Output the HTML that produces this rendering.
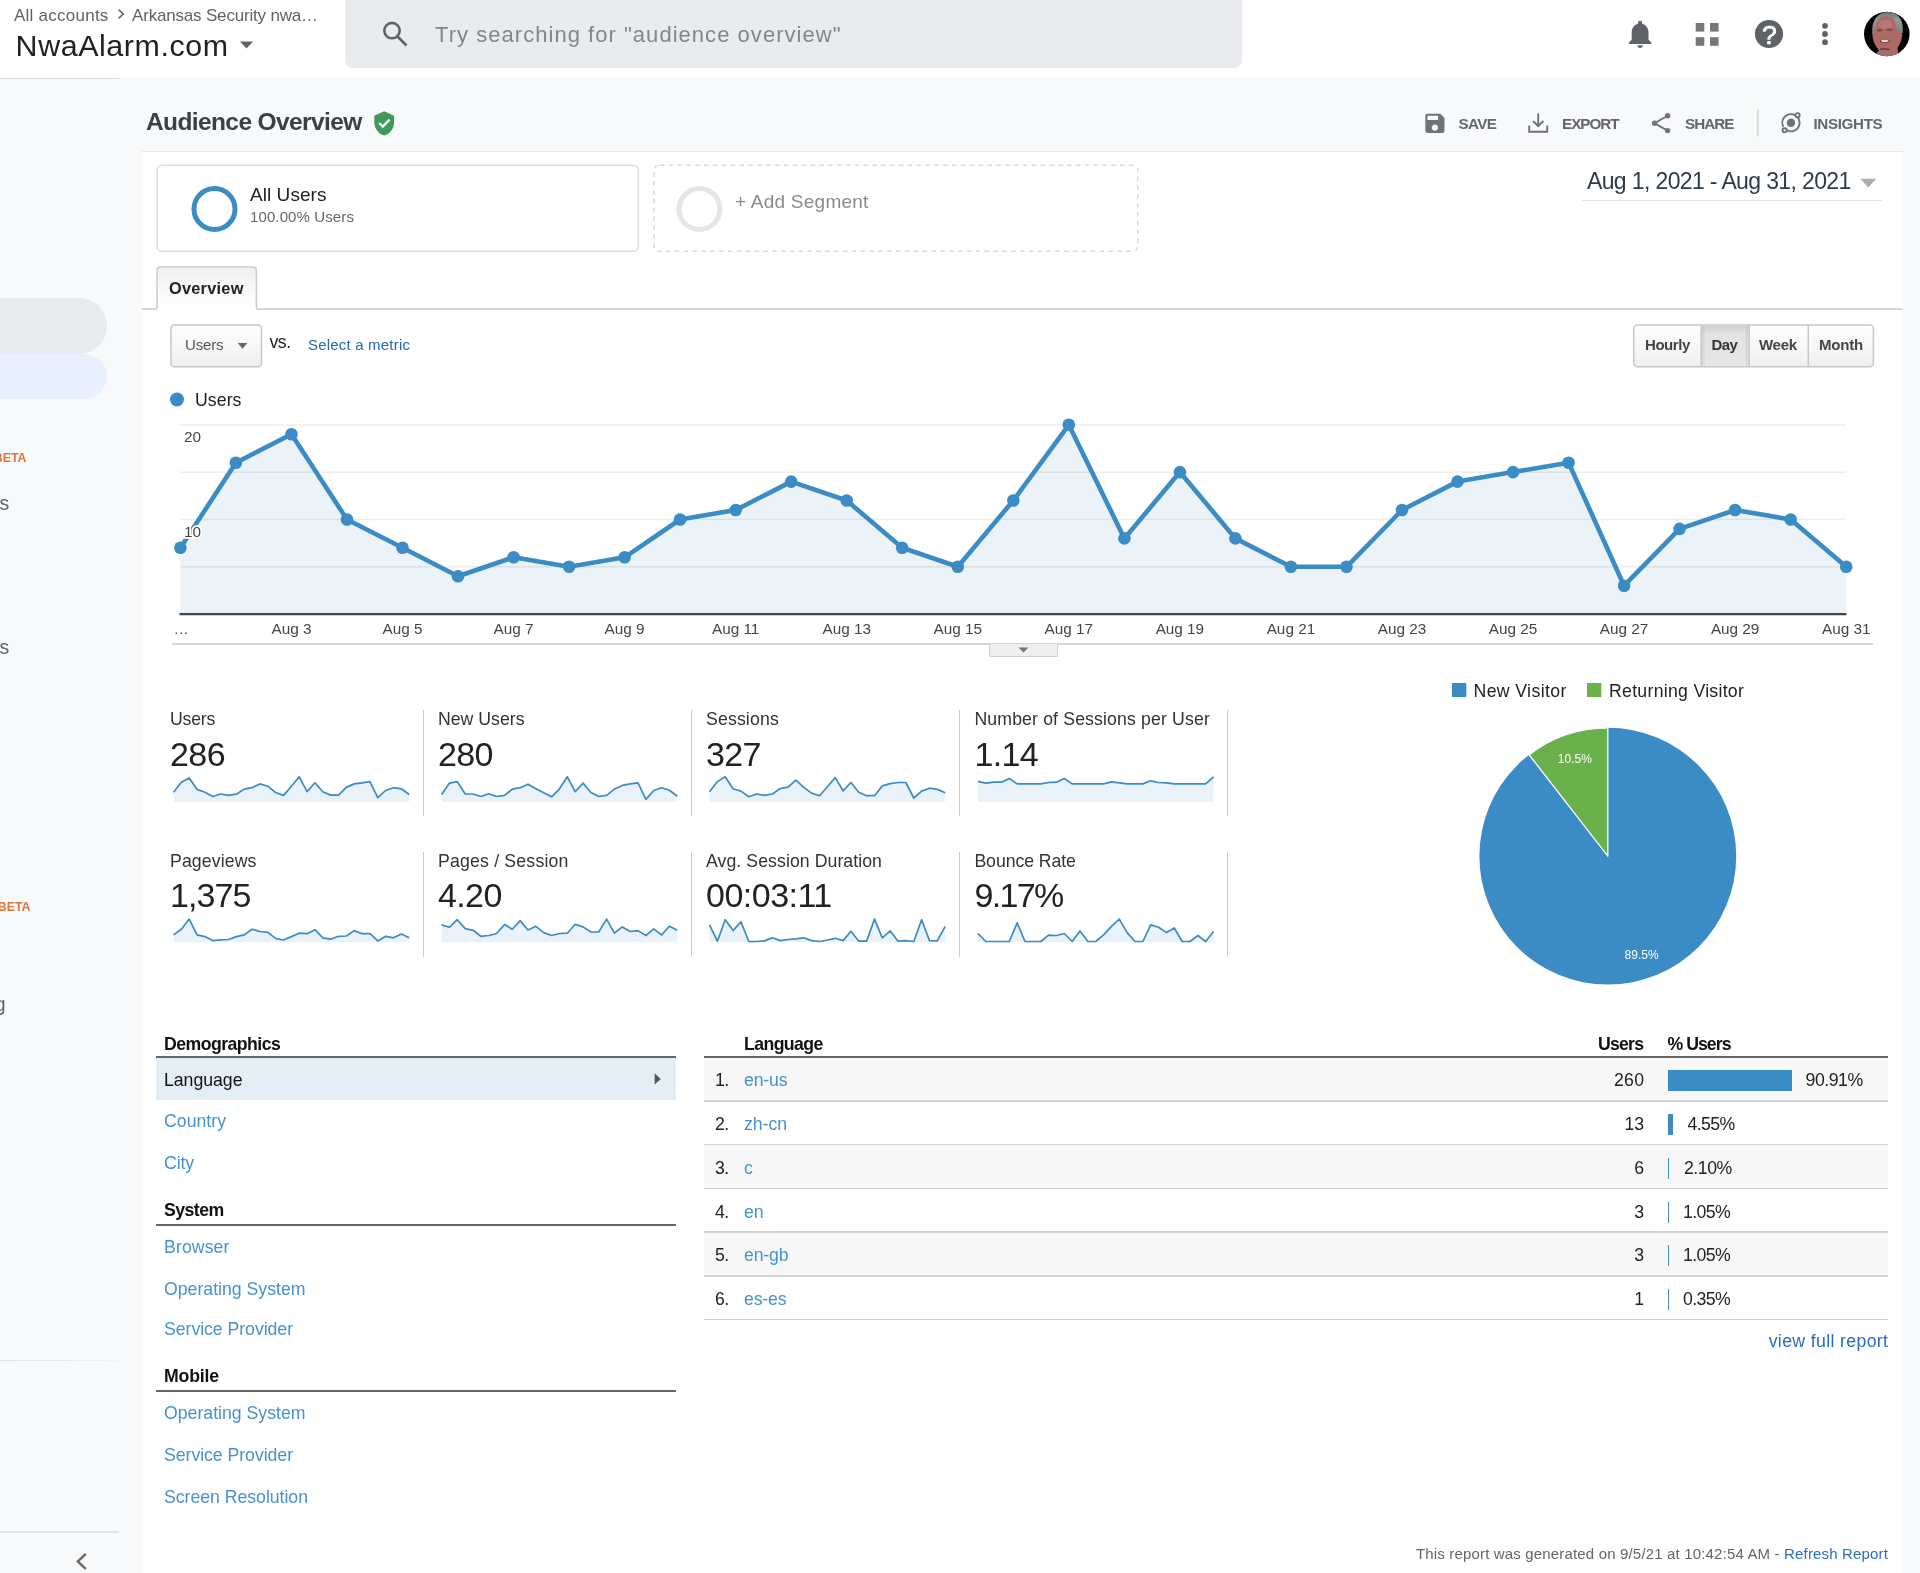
<!DOCTYPE html>
<html lang="en">
<head>
<meta charset="utf-8">
<title>Analytics - Audience Overview</title>
<style>
html,body{margin:0;padding:0;}
html{overflow:hidden;width:1920px;height:1573px;}
body{width:1920px;height:1573px;position:relative;overflow:hidden;background:#f8f9fa;font-family:"Liberation Sans",sans-serif;}
.a{position:absolute;}
.t{position:absolute;white-space:nowrap;font-family:"Liberation Sans",sans-serif;}
#hdr{left:0;top:0;width:1920px;height:77px;background:#fff;}
#search{left:345px;top:-8px;width:897px;height:76px;background:#e9ebee;border-radius:8px;}
#panel{left:141.8px;top:151px;width:1760.8px;height:1422px;box-sizing:border-box;background:#fff;border-top:1.3px solid #e6e7e8;box-shadow:1.5px 0 0 #fafbfc;}
.hl{position:absolute;height:1px;background:#dadce0;}
.vdiv{position:absolute;width:1px;background:#ccc;}
.row{position:absolute;left:704px;width:1184px;}
.rl{position:absolute;left:704px;width:1184px;height:1.6px;background:#d2d2d2;}
.bar{position:absolute;left:1667.5px;height:21px;background:#3b8bc4;}
svg{position:absolute;left:0;top:0;overflow:visible;will-change:transform;}
#txt{position:absolute;left:0;top:0;width:1920px;height:1573px;will-change:transform;}
</style>
</head>
<body>
<!-- top header -->
<div class="a" id="hdr"></div>
<div class="a" id="search"></div>
<div class="hl" style="left:0;top:77.5px;width:119px;"></div>

<!-- left nav (collapsed / scrolled) -->
<div class="a" style="left:-60px;top:298px;width:167px;height:55.5px;border-radius:28px;background:#e8eaed;"></div>
<div class="a" style="left:-60px;top:353.5px;width:167px;height:45px;border-radius:23px;background:#e8f0fe;"></div>
<div class="hl" style="left:0;top:1360px;width:119px;height:1.4px;background:linear-gradient(to right,#e1e2e4,#e6e7e9 50%,#f3f4f5);"></div>
<div class="hl" style="left:0;top:1531.2px;width:119px;height:1.4px;background:#e2e3e5;"></div>

<!-- main white panel -->
<div class="a" id="panel"></div>

<!-- segments -->
<div class="hl" style="left:1582px;top:200px;width:299.5px;background:#e4e4e4;"></div>

<!-- chart bottom rule + handle -->
<div class="hl" style="left:171.5px;top:643px;width:1701.5px;background:#d6d6d6;height:1.5px;"></div>
<div class="a" style="left:988.5px;top:644px;width:69px;height:12.5px;box-sizing:border-box;border:1px solid #d0d0d0;border-top:none;background:#efefef;border-radius:0 0 2px 2px;"></div>

<!-- metric dividers -->
<div class="vdiv" style="left:423px;top:710px;height:106px;"></div>
<div class="vdiv" style="left:691px;top:710px;height:106px;"></div>
<div class="vdiv" style="left:959px;top:710px;height:106px;"></div>
<div class="vdiv" style="left:1227px;top:710px;height:106px;"></div>
<div class="vdiv" style="left:423px;top:852px;height:105px;"></div>
<div class="vdiv" style="left:691px;top:852px;height:105px;"></div>
<div class="vdiv" style="left:959px;top:852px;height:105px;"></div>
<div class="vdiv" style="left:1227px;top:852px;height:105px;"></div>

<!-- demographics list -->
<div class="a" style="left:156px;top:1058px;width:520px;height:41.5px;background:#e3eef5;"></div>
<div class="hl" style="left:156px;top:1055.9px;width:520px;height:2px;background:#666;"></div>
<div class="hl" style="left:156px;top:1223.9px;width:520px;height:2px;background:#666;"></div>
<div class="hl" style="left:156px;top:1389.9px;width:520px;height:2px;background:#666;"></div>

<!-- language table -->
<div class="row" style="top:1058px;height:43.0px;background:#f7f7f7"></div>
<div class="bar" style="top:1070px;width:124.5px"></div>
<div class="row" style="top:1101.0px;height:43.700000000000045px;background:#fff"></div>
<div class="bar" style="top:1114px;width:5.5px"></div>
<div class="row" style="top:1144.7px;height:43.700000000000045px;background:#f7f7f7"></div>
<div class="bar" style="top:1157.5px;width:1.8px"></div>
<div class="row" style="top:1188.4px;height:43.69999999999982px;background:#fff"></div>
<div class="bar" style="top:1201.5px;width:1.8px"></div>
<div class="row" style="top:1232.1px;height:43.700000000000045px;background:#f7f7f7"></div>
<div class="bar" style="top:1245px;width:1.8px"></div>
<div class="row" style="top:1275.8px;height:43.700000000000045px;background:#fff"></div>
<div class="bar" style="top:1289px;width:1.8px"></div>
<div class="rl" style="top:1100.20px;"></div>
<div class="rl" style="top:1143.90px;"></div>
<div class="rl" style="top:1187.60px;"></div>
<div class="rl" style="top:1231.30px;"></div>
<div class="rl" style="top:1275.00px;"></div>
<div class="rl" style="top:1318.70px;"></div>
<div class="hl" style="left:704px;top:1055.9px;width:1184px;height:2px;background:#666;"></div>

<!-- vector layer: chart, pie, sparklines, icons -->
<svg width="1920" height="1573" viewBox="0 0 1920 1573">
  <defs>
    <linearGradient id="gTab" x1="0" y1="0" x2="0" y2="1"><stop offset="0" stop-color="#f0f0f0"/><stop offset="1" stop-color="#ffffff"/></linearGradient>
    <linearGradient id="gBtn" x1="0" y1="0" x2="0" y2="1"><stop offset="0" stop-color="#ffffff"/><stop offset="1" stop-color="#efefef"/></linearGradient>
    <linearGradient id="gDay" x1="0" y1="0" x2="0" y2="1"><stop offset="0" stop-color="#d2d2d2"/><stop offset="0.2" stop-color="#e2e2e2"/><stop offset="1" stop-color="#e6e6e6"/></linearGradient>
  </defs>
  <!-- segment boxes -->
  <rect x="157.25" y="165.35" width="481.05" height="85.8" rx="4.6" fill="#fff" stroke="#dedede" stroke-width="1.5"/>
  <rect x="654.05" y="165.35" width="483.7" height="85.8" rx="4.6" fill="#fff" stroke="#d9d9d9" stroke-width="1.5" stroke-dasharray="4.7 4.15" stroke-dashoffset="-1.2"/>
  <!-- overview tab + rule -->
  <path d="M157,309 V270.5 Q157,267 160.5,267 H252.85 Q256.35,267 256.35,270.5 V309 Z" fill="url(#gTab)"/>
  <path d="M141.8,309 H155.5 Q157,309 157,307.5 V270.5 Q157,267 160.5,267 H252.85 Q256.35,267 256.35,270.5 V307.5 Q256.35,309 257.85,309 H1902.5" fill="none" stroke="#cacaca" stroke-width="1.5"/>
  <!-- metric selector -->
  <rect x="170.95" y="325.05" width="90.55" height="41.7" rx="3.6" fill="url(#gBtn)" stroke="#c8c8c8" stroke-width="1.5"/>
  <!-- granularity buttons -->
  <rect x="1633.8" y="325" width="239.6" height="41.7" rx="3.6" fill="url(#gBtn)" stroke="#c8c8c8" stroke-width="1.5"/>
  <rect x="1701.9" y="326" width="46.6" height="39.7" fill="url(#gDay)"/>
  <rect x="1701.9" y="326" width="3" height="39.7" fill="#000" fill-opacity="0.05"/>
  <rect x="1745.5" y="326" width="3" height="39.7" fill="#000" fill-opacity="0.05"/>
  <g stroke="#c8c8c8" stroke-width="1.5"><path d="M1701.2,325.3 V366.4 M1749.2,325.3 V366.4 M1808.3,325.3 V366.4"/></g>
  <!-- gridlines -->
  <g stroke="#ededed" stroke-width="1.5">
    <line x1="180" y1="425" x2="1846" y2="425"/>
    <line x1="180" y1="472.2" x2="1846" y2="472.2"/>
    <line x1="180" y1="519.6" x2="1846" y2="519.6"/>
    <line x1="180" y1="566.8" x2="1846" y2="566.8"/>
  </g>
  <polygon points="180.4,614.1 180.4,547.8 235.9,462.7 291.5,434.3 347.0,519.5 402.5,547.8 458.0,576.2 513.6,557.3 569.1,566.8 624.6,557.3 680.1,519.5 735.7,510.0 791.2,481.6 846.7,500.5 902.2,547.8 957.8,566.8 1013.3,500.5 1068.8,424.8 1124.4,538.4 1179.9,472.1 1235.4,538.4 1290.9,566.8 1346.5,566.8 1402.0,510.0 1457.5,481.6 1513.0,472.1 1568.6,462.7 1624.1,585.7 1679.6,528.9 1735.1,510.0 1790.7,519.5 1846.2,566.8 1846.2,614.1" fill="#3b8bc4" fill-opacity="0.1"/>
  <line x1="179.5" y1="614.2" x2="1846.5" y2="614.2" stroke="#444" stroke-width="2.2"/>
  <polyline points="180.4,547.8 235.9,462.7 291.5,434.3 347.0,519.5 402.5,547.8 458.0,576.2 513.6,557.3 569.1,566.8 624.6,557.3 680.1,519.5 735.7,510.0 791.2,481.6 846.7,500.5 902.2,547.8 957.8,566.8 1013.3,500.5 1068.8,424.8 1124.4,538.4 1179.9,472.1 1235.4,538.4 1290.9,566.8 1346.5,566.8 1402.0,510.0 1457.5,481.6 1513.0,472.1 1568.6,462.7 1624.1,585.7 1679.6,528.9 1735.1,510.0 1790.7,519.5 1846.2,566.8" fill="none" stroke="#3b8bc4" stroke-width="4.6" stroke-linejoin="round" stroke-linecap="round"/>
  <g fill="#3b8bc4"><circle cx="180.4" cy="547.8" r="6.3"/><circle cx="235.9" cy="462.7" r="6.3"/><circle cx="291.5" cy="434.3" r="6.3"/><circle cx="347.0" cy="519.5" r="6.3"/><circle cx="402.5" cy="547.8" r="6.3"/><circle cx="458.0" cy="576.2" r="6.3"/><circle cx="513.6" cy="557.3" r="6.3"/><circle cx="569.1" cy="566.8" r="6.3"/><circle cx="624.6" cy="557.3" r="6.3"/><circle cx="680.1" cy="519.5" r="6.3"/><circle cx="735.7" cy="510.0" r="6.3"/><circle cx="791.2" cy="481.6" r="6.3"/><circle cx="846.7" cy="500.5" r="6.3"/><circle cx="902.2" cy="547.8" r="6.3"/><circle cx="957.8" cy="566.8" r="6.3"/><circle cx="1013.3" cy="500.5" r="6.3"/><circle cx="1068.8" cy="424.8" r="6.3"/><circle cx="1124.4" cy="538.4" r="6.3"/><circle cx="1179.9" cy="472.1" r="6.3"/><circle cx="1235.4" cy="538.4" r="6.3"/><circle cx="1290.9" cy="566.8" r="6.3"/><circle cx="1346.5" cy="566.8" r="6.3"/><circle cx="1402.0" cy="510.0" r="6.3"/><circle cx="1457.5" cy="481.6" r="6.3"/><circle cx="1513.0" cy="472.1" r="6.3"/><circle cx="1568.6" cy="462.7" r="6.3"/><circle cx="1624.1" cy="585.7" r="6.3"/><circle cx="1679.6" cy="528.9" r="6.3"/><circle cx="1735.1" cy="510.0" r="6.3"/><circle cx="1790.7" cy="519.5" r="6.3"/><circle cx="1846.2" cy="566.8" r="6.3"/></g>
  <circle cx="177" cy="399.5" r="7" fill="#3b8bc4"/>
  <!-- handle triangle -->
  <path d="M1018.5,647.5 h10 l-5,5 z" fill="#777"/>
  <!-- sparklines -->
  <polygon points="173.5,801.7 173.5,792.2 181.4,782.2 189.2,777.9 197.1,789.4 204.9,792.2 212.8,796.5 220.6,794.0 228.5,795.4 236.4,794.2 244.2,789.1 252.1,787.7 259.9,783.9 267.8,786.2 275.6,792.5 283.5,795.4 291.4,786.2 299.2,776.8 307.1,791.7 314.9,782.8 322.8,791.7 330.6,795.1 338.5,795.1 346.3,787.4 354.2,783.9 362.1,782.8 369.9,781.6 377.8,797.7 385.6,790.5 393.5,787.7 401.3,788.8 409.2,794.5 409.2,801.7" fill="#e9f1f9"/><polyline points="173.5,792.2 181.4,782.2 189.2,777.9 197.1,789.4 204.9,792.2 212.8,796.5 220.6,794.0 228.5,795.4 236.4,794.2 244.2,789.1 252.1,787.7 259.9,783.9 267.8,786.2 275.6,792.5 283.5,795.4 291.4,786.2 299.2,776.8 307.1,791.7 314.9,782.8 322.8,791.7 330.6,795.1 338.5,795.1 346.3,787.4 354.2,783.9 362.1,782.8 369.9,781.6 377.8,797.7 385.6,790.5 393.5,787.7 401.3,788.8 409.2,794.5" fill="none" stroke="#3b8bc4" stroke-width="1.7" stroke-linejoin="round"/>
<polygon points="441.6,801.7 441.6,794.5 449.5,783.1 457.3,781.6 465.2,794.0 473.0,794.0 480.9,796.5 488.7,793.7 496.6,796.5 504.5,795.4 512.3,789.1 520.2,787.7 528.0,784.2 535.9,788.8 543.7,792.8 551.6,796.8 559.5,788.8 567.3,776.8 575.2,791.7 583.0,783.1 590.9,792.5 598.7,796.5 606.6,795.4 614.4,789.1 622.3,785.4 630.2,783.9 638.0,782.8 645.9,799.4 653.7,790.5 661.6,787.7 669.4,790.2 677.3,796.2 677.3,801.7" fill="#e9f1f9"/><polyline points="441.6,794.5 449.5,783.1 457.3,781.6 465.2,794.0 473.0,794.0 480.9,796.5 488.7,793.7 496.6,796.5 504.5,795.4 512.3,789.1 520.2,787.7 528.0,784.2 535.9,788.8 543.7,792.8 551.6,796.8 559.5,788.8 567.3,776.8 575.2,791.7 583.0,783.1 590.9,792.5 598.7,796.5 606.6,795.4 614.4,789.1 622.3,785.4 630.2,783.9 638.0,782.8 645.9,799.4 653.7,790.5 661.6,787.7 669.4,790.2 677.3,796.2" fill="none" stroke="#3b8bc4" stroke-width="1.7" stroke-linejoin="round"/>
<polygon points="709.5,801.7 709.5,791.7 717.4,781.6 725.2,776.8 733.1,788.8 740.9,791.1 748.8,796.8 756.6,794.0 764.5,795.4 772.4,794.0 780.2,788.5 788.1,787.1 795.9,780.2 803.8,787.4 811.6,793.1 819.5,795.7 827.4,786.8 835.2,777.6 843.1,790.8 850.9,782.5 858.8,792.2 866.6,795.7 874.5,795.7 882.3,785.9 890.2,783.6 898.1,782.5 905.9,782.5 913.8,798.0 921.6,791.1 929.5,788.2 937.3,789.4 945.2,792.8 945.2,801.7" fill="#e9f1f9"/><polyline points="709.5,791.7 717.4,781.6 725.2,776.8 733.1,788.8 740.9,791.1 748.8,796.8 756.6,794.0 764.5,795.4 772.4,794.0 780.2,788.5 788.1,787.1 795.9,780.2 803.8,787.4 811.6,793.1 819.5,795.7 827.4,786.8 835.2,777.6 843.1,790.8 850.9,782.5 858.8,792.2 866.6,795.7 874.5,795.7 882.3,785.9 890.2,783.6 898.1,782.5 905.9,782.5 913.8,798.0 921.6,791.1 929.5,788.2 937.3,789.4 945.2,792.8" fill="none" stroke="#3b8bc4" stroke-width="1.7" stroke-linejoin="round"/>
<polygon points="977.9,801.7 977.9,781.4 985.8,783.1 993.6,782.2 1001.5,782.2 1009.3,778.5 1017.2,783.9 1025.0,783.9 1032.9,783.9 1040.8,783.9 1048.6,782.5 1056.5,782.2 1064.3,778.5 1072.2,783.9 1080.0,783.9 1087.9,783.9 1095.8,783.9 1103.6,783.9 1111.5,781.9 1119.3,782.8 1127.2,783.9 1135.0,783.9 1142.9,783.9 1150.7,780.8 1158.6,782.5 1166.5,782.8 1174.3,783.9 1182.2,783.9 1190.0,783.9 1197.9,783.9 1205.7,783.9 1213.6,776.8 1213.6,801.7" fill="#e9f1f9"/><polyline points="977.9,781.4 985.8,783.1 993.6,782.2 1001.5,782.2 1009.3,778.5 1017.2,783.9 1025.0,783.9 1032.9,783.9 1040.8,783.9 1048.6,782.5 1056.5,782.2 1064.3,778.5 1072.2,783.9 1080.0,783.9 1087.9,783.9 1095.8,783.9 1103.6,783.9 1111.5,781.9 1119.3,782.8 1127.2,783.9 1135.0,783.9 1142.9,783.9 1150.7,780.8 1158.6,782.5 1166.5,782.8 1174.3,783.9 1182.2,783.9 1190.0,783.9 1197.9,783.9 1205.7,783.9 1213.6,776.8" fill="none" stroke="#3b8bc4" stroke-width="1.7" stroke-linejoin="round"/>
<polygon points="173.5,942.3 173.5,934.9 181.4,929.2 189.2,919.1 197.1,934.9 204.9,936.6 212.8,940.6 220.6,939.8 228.5,939.5 236.4,936.6 244.2,934.9 252.1,929.2 259.9,931.5 267.8,932.3 275.6,938.3 283.5,940.0 291.4,936.6 299.2,933.2 307.1,933.7 314.9,929.7 322.8,937.8 330.6,939.2 338.5,936.3 346.3,936.0 354.2,930.6 362.1,933.7 369.9,933.5 377.8,940.9 385.6,936.3 393.5,937.8 401.3,934.0 409.2,937.8 409.2,942.3" fill="#e9f1f9"/><polyline points="173.5,934.9 181.4,929.2 189.2,919.1 197.1,934.9 204.9,936.6 212.8,940.6 220.6,939.8 228.5,939.5 236.4,936.6 244.2,934.9 252.1,929.2 259.9,931.5 267.8,932.3 275.6,938.3 283.5,940.0 291.4,936.6 299.2,933.2 307.1,933.7 314.9,929.7 322.8,937.8 330.6,939.2 338.5,936.3 346.3,936.0 354.2,930.6 362.1,933.7 369.9,933.5 377.8,940.9 385.6,936.3 393.5,937.8 401.3,934.0 409.2,937.8" fill="none" stroke="#3b8bc4" stroke-width="1.7" stroke-linejoin="round"/>
<polygon points="441.6,942.3 441.6,924.9 449.5,927.2 457.3,919.7 465.2,928.6 473.0,930.3 480.9,936.3 488.7,935.5 496.6,933.5 504.5,924.6 512.3,929.2 520.2,920.6 528.0,930.0 535.9,926.3 543.7,932.6 551.6,935.5 559.5,933.5 567.3,933.2 575.2,924.3 583.0,926.9 590.9,932.0 598.7,932.0 606.6,919.1 614.4,933.2 622.3,926.9 630.2,931.5 638.0,930.6 645.9,935.5 653.7,928.9 661.6,934.9 669.4,926.3 677.3,930.3 677.3,942.3" fill="#e9f1f9"/><polyline points="441.6,924.9 449.5,927.2 457.3,919.7 465.2,928.6 473.0,930.3 480.9,936.3 488.7,935.5 496.6,933.5 504.5,924.6 512.3,929.2 520.2,920.6 528.0,930.0 535.9,926.3 543.7,932.6 551.6,935.5 559.5,933.5 567.3,933.2 575.2,924.3 583.0,926.9 590.9,932.0 598.7,932.0 606.6,919.1 614.4,933.2 622.3,926.9 630.2,931.5 638.0,930.6 645.9,935.5 653.7,928.9 661.6,934.9 669.4,926.3 677.3,930.3" fill="none" stroke="#3b8bc4" stroke-width="1.7" stroke-linejoin="round"/>
<polygon points="709.5,942.3 709.5,924.9 717.4,941.2 725.2,919.7 733.1,930.6 740.9,921.7 748.8,941.5 756.6,941.5 764.5,940.9 772.4,937.8 780.2,940.6 788.1,939.5 795.9,938.9 803.8,937.8 811.6,940.6 819.5,941.5 827.4,940.0 835.2,938.3 843.1,940.6 850.9,931.2 858.8,941.2 866.6,941.2 874.5,919.1 882.3,937.8 890.2,930.9 898.1,941.2 905.9,940.6 913.8,941.5 921.6,919.7 929.5,940.6 937.3,940.9 945.2,926.3 945.2,942.3" fill="#e9f1f9"/><polyline points="709.5,924.9 717.4,941.2 725.2,919.7 733.1,930.6 740.9,921.7 748.8,941.5 756.6,941.5 764.5,940.9 772.4,937.8 780.2,940.6 788.1,939.5 795.9,938.9 803.8,937.8 811.6,940.6 819.5,941.5 827.4,940.0 835.2,938.3 843.1,940.6 850.9,931.2 858.8,941.2 866.6,941.2 874.5,919.1 882.3,937.8 890.2,930.9 898.1,941.2 905.9,940.6 913.8,941.5 921.6,919.7 929.5,940.6 937.3,940.9 945.2,926.3" fill="none" stroke="#3b8bc4" stroke-width="1.7" stroke-linejoin="round"/>
<polygon points="977.9,942.3 977.9,933.5 985.8,941.5 993.6,941.5 1001.5,941.5 1009.3,941.5 1017.2,922.9 1025.0,941.5 1032.9,941.5 1040.8,941.5 1048.6,935.2 1056.5,935.5 1064.3,933.5 1072.2,941.5 1080.0,930.9 1087.9,941.5 1095.8,941.5 1103.6,934.9 1111.5,926.3 1119.3,919.1 1127.2,932.6 1135.0,941.5 1142.9,941.5 1150.7,924.9 1158.6,927.2 1166.5,932.6 1174.3,928.0 1182.2,941.5 1190.0,941.5 1197.9,935.5 1205.7,941.5 1213.6,931.2 1213.6,942.3" fill="#e9f1f9"/><polyline points="977.9,933.5 985.8,941.5 993.6,941.5 1001.5,941.5 1009.3,941.5 1017.2,922.9 1025.0,941.5 1032.9,941.5 1040.8,941.5 1048.6,935.2 1056.5,935.5 1064.3,933.5 1072.2,941.5 1080.0,930.9 1087.9,941.5 1095.8,941.5 1103.6,934.9 1111.5,926.3 1119.3,919.1 1127.2,932.6 1135.0,941.5 1142.9,941.5 1150.7,924.9 1158.6,927.2 1166.5,932.6 1174.3,928.0 1182.2,941.5 1190.0,941.5 1197.9,935.5 1205.7,941.5 1213.6,931.2" fill="none" stroke="#3b8bc4" stroke-width="1.7" stroke-linejoin="round"/>
  <!-- pie -->
  <circle cx="1607.8" cy="856.2" r="128.4" fill="#3b8bc4"/><path d="M1607.8,856.2 L1607.8,727.8000000000001 A128.4,128.4 0 0 0 1529.10,754.74 Z" fill="#6ab04b" stroke="#fff" stroke-width="1.3" stroke-linejoin="round"/>
  <rect x="1452" y="683" width="14.3" height="14" fill="#3b8bc4"/>
  <rect x="1587" y="683" width="14.3" height="14" fill="#6ab04b"/>
  <text x="1574.8" y="762.5" font-family="Liberation Sans, sans-serif" font-size="12" fill="#fff" text-anchor="middle">10.5%</text>
  <text x="1641.6" y="959" font-family="Liberation Sans, sans-serif" font-size="12" fill="#fff" text-anchor="middle">89.5%</text>

  <!-- segment circles -->
  <circle cx="214.5" cy="209" r="20.5" fill="none" stroke="#3b8bc4" stroke-width="5"/>
  <circle cx="699.5" cy="209" r="20.5" fill="none" stroke="#e5e5e5" stroke-width="5.2"/>

  <!-- breadcrumb chevron -->
  <path d="M118.6,9.6 l4.7,4.4 l-4.7,4.4" fill="none" stroke="#5f6368" stroke-width="1.6"/>
  <!-- property dropdown arrow -->
  <path d="M240,41.5 h13 l-6.5,7 z" fill="#5f6368"/>
  <!-- search icon -->
  <g fill="none" stroke="#5f6368" stroke-width="2.6">
    <circle cx="392" cy="30.6" r="7.7"/>
    <path d="M397.5,36.5 L406.5,45.5" stroke-linecap="butt"/>
  </g>
  <!-- bell -->
  <path fill="#5f6368" transform="translate(1623.3,17.3) scale(1.4)" d="M12 22c1.1 0 2-.9 2-2h-4c0 1.1.89 2 2 2zm6-6v-5c0-3.07-1.64-5.64-4.5-6.32V4c0-.83-.67-1.5-1.5-1.5s-1.5.67-1.5 1.5v.68C7.63 5.36 6 7.92 6 11v5l-2 2v1h16v-1l-2-2z"/>
  <!-- apps grid -->
  <g fill="#777">
    <rect x="1695.7" y="23" width="8.6" height="8.6"/><rect x="1710" y="23" width="8.6" height="8.6"/>
    <rect x="1695.7" y="37.2" width="8.6" height="8.6"/><rect x="1710" y="37.2" width="8.6" height="8.6"/>
  </g>
  <!-- help -->
  <circle cx="1769" cy="34" r="14.1" fill="#5f6368"/>
  <text x="1769.3" y="43.6" font-family="Liberation Sans, sans-serif" font-size="26.5" fill="#fff" stroke="#fff" stroke-width="0.7" text-anchor="middle">?</text>
  <!-- more -->
  <g fill="#5f6368"><circle cx="1825" cy="25.8" r="2.9"/><circle cx="1825" cy="34" r="2.9"/><circle cx="1825" cy="42.2" r="2.9"/></g>
  <!-- avatar -->
  <defs>
    <clipPath id="avc"><ellipse cx="1886.8" cy="34" rx="22.8" ry="22.2"/></clipPath>
    <filter id="avb" x="-20%" y="-20%" width="140%" height="140%"><feGaussianBlur stdDeviation="0.7"/></filter>
    <linearGradient id="hair" x1="0" y1="0" x2="0" y2="1"><stop offset="0" stop-color="#6f6f6f"/><stop offset="0.35" stop-color="#9a9a9a"/><stop offset="1" stop-color="#7b7b7b"/></linearGradient>
  </defs>
  <ellipse cx="1886.8" cy="34" rx="22.8" ry="22.2" fill="#020202"/>
  <g clip-path="url(#avc)"><g filter="url(#avb)">
    <path d="M1872.3,34 C1871,20 1878,12 1888,12 C1898.5,12 1904,20 1902.8,33 L1897,33 L1876,33 Z" fill="url(#hair)"/>
    <path d="M1875.8,30 C1875.6,21 1879,16.2 1886,16.2 C1892,16.2 1895.6,19.5 1896.2,27 L1897,31.5 C1900,30.5 1902.6,32 1902.2,36 C1901.6,41 1899.5,45 1897.5,48 L1899,60 L1878,60 L1879,50 C1875,46 1872.4,40 1872.4,34 C1872.4,31 1874,30 1875.8,30 Z" fill="#ab6b63"/>
    <ellipse cx="1885.5" cy="24.5" rx="7" ry="4.5" fill="#b57a71"/>
    <ellipse cx="1879.8" cy="30.3" rx="3" ry="1.2" fill="#7d4a45"/>
    <ellipse cx="1889.5" cy="29.8" rx="3.2" ry="1.2" fill="#7d4a45"/>
    <ellipse cx="1885" cy="41" rx="5.2" ry="1.6" fill="#5a302d"/>
    <ellipse cx="1884.8" cy="40.9" rx="3.8" ry="1.1" fill="#f0d6cf"/>
    <path d="M1880,49.3 q5,-1 9.5,0.2" fill="none" stroke="#6e3f3a" stroke-width="1.6"/>
    <path d="M1876,54 l3,-3.5 l1,7 z" fill="#5b8fd6"/>
    <path d="M1899,53 l3.5,-4 l1,5 z" fill="#5b8fd6"/>
  </g></g>
  <!-- verified shield -->
  <path d="M384.2,111.3 l-9.9,4.4 v6.6 c0,6.1 4.2,11.8 9.9,13.2 c5.7,-1.4 9.9,-7.1 9.9,-13.2 v-6.6 z" fill="#3d9a59"/>
  <path d="M379.3,123 l3.5,3.6 l6.8,-7" fill="none" stroke="#fff" stroke-width="2.3"/>

  <!-- save icon -->
  <path fill="#707275" d="M1440.3,113.7h-12.9c-1.2,0 -2.1,1 -2.1,2.1v15c0,1.2 1,2.1 2.1,2.1h15c1.2,0 2.1,-1 2.1,-2.1v-12.9zM1434.9,130.8c-1.8,0 -3.2,-1.4 -3.2,-3.2s1.4,-3.2 3.2,-3.2s3.2,1.4 3.2,3.2s-1.4,3.2 -3.2,3.2zM1438.1,120.1h-10.7v-4.3h10.7z"/>
  <!-- export icon -->
  <g fill="none" stroke="#707275" stroke-width="1.9">
    <path d="M1538.2,113.5v12.2M1533,121l5.2,5.2l5.2,-5.2"/>
    <path d="M1529.2,125.5v6.2h18v-6.2"/>
  </g>
  <!-- share icon -->
  <g fill="#707275" stroke="#707275">
    <path d="M1667.5,115.8 L1654.6,123.2 L1667.5,130.6" fill="none" stroke-width="1.9"/>
    <circle cx="1667.6" cy="115.8" r="2.7" stroke="none"/><circle cx="1654.6" cy="123.2" r="2.7" stroke="none"/><circle cx="1667.6" cy="130.6" r="2.7" stroke="none"/>
  </g>
  <!-- actions divider -->
  <line x1="1757.8" y1="109" x2="1757.8" y2="136.5" stroke="#cfcfcf" stroke-width="1.3"/>
  <!-- insights icon -->
  <g fill="none" stroke="#707275" stroke-width="1.9">
    <circle cx="1791" cy="122.7" r="3.3" fill="#707275"/>
    <path d="M1797.6,117.2 a8.6,8.6 0 0 1 -10.5,13.2"/>
    <path d="M1783.4,126.9 a8.6,8.6 0 0 1 12,-11.5"/>
    <circle cx="1797.6" cy="115.2" r="2.1" fill="#f8f9fa"/>
    <circle cx="1784.6" cy="130.3" r="2.1" fill="#f8f9fa"/>
  </g>
  <!-- date arrow -->
  <path d="M1860.3,178.8 h16 l-8,8.8 z" fill="#adadad"/>
  <!-- metric dropdown arrow -->
  <path d="M237.8,343 h9.5 l-4.75,5.7 z" fill="#666"/>
  <!-- list arrow -->
  <path d="M654.6,1073.2 v11.4 l6.2,-5.7 z" fill="#555"/>
  <!-- collapse chevron -->
  <path d="M85.8,1553.9 l-8,7.55 l8,7.55" fill="none" stroke="#666" stroke-width="2.4"/>
</svg>

<!-- text layer -->
<div id="txt">
<span class="t" id="t0" style="top:4.90px;font-size:17px;line-height:22px;color:#5f6368;letter-spacing:0.246px;left:14px;">All accounts</span>
<span class="t" id="t1" style="top:4.90px;font-size:17px;line-height:22px;color:#5f6368;letter-spacing:-0.182px;left:132px;">Arkansas Security nwa…</span>
<span class="t" id="t2" style="top:25.80px;font-size:30.4px;line-height:38px;color:#202124;letter-spacing:0.590px;left:15.6px;">NwaAlarm.com</span>
<span class="t" id="t3" style="top:20.70px;font-size:22px;line-height:28px;color:#80868b;letter-spacing:1.036px;left:435px;">Try searching for "audience overview"</span>
<span class="t" id="t4" style="top:105.60px;font-size:24.5px;line-height:31px;color:#3c4043;font-weight:700;letter-spacing:-0.609px;left:146px;">Audience Overview</span>
<span class="t" id="t5" style="top:113.80px;font-size:15.2px;line-height:19px;color:#636568;font-weight:700;letter-spacing:-0.638px;left:1458.5px;">SAVE</span>
<span class="t" id="t6" style="top:113.80px;font-size:15.2px;line-height:19px;color:#636568;font-weight:700;letter-spacing:-0.991px;left:1562px;">EXPORT</span>
<span class="t" id="t7" style="top:113.80px;font-size:15.2px;line-height:19px;color:#636568;font-weight:700;letter-spacing:-0.927px;left:1685px;">SHARE</span>
<span class="t" id="t8" style="top:113.80px;font-size:15.2px;line-height:19px;color:#636568;font-weight:700;letter-spacing:-0.365px;left:1813.5px;">INSIGHTS</span>
<span class="t" id="t9" style="top:183.20px;font-size:19px;line-height:24px;color:#222;letter-spacing:0.057px;left:250px;">All Users</span>
<span class="t" id="t10" style="top:206.70px;font-size:15px;line-height:19px;color:#666;letter-spacing:0.115px;left:250px;">100.00% Users</span>
<span class="t" id="t11" style="top:190.20px;font-size:19px;line-height:24px;color:#8a8a8a;letter-spacing:0.242px;left:735px;">+ Add Segment</span>
<span class="t" id="t12" style="top:166.90px;font-size:23px;line-height:29px;color:#2d3b4e;letter-spacing:-0.631px;left:1587px;">Aug 1, 2021 - Aug 31, 2021</span>
<span class="t" id="t13" style="top:278.00px;font-size:16.3px;line-height:21px;color:#222;font-weight:700;letter-spacing:0.277px;left:169px;">Overview</span>
<span class="t" id="t14" style="top:334.70px;font-size:15px;line-height:19px;color:#555;letter-spacing:-0.149px;left:185px;">Users</span>
<span class="t" id="t15" style="top:331.30px;font-size:17.7px;line-height:23px;color:#222;letter-spacing:-0.524px;left:269.5px;">vs.</span>
<span class="t" id="t16" style="top:334.70px;font-size:15px;line-height:19px;color:#2468b8;letter-spacing:0.193px;left:308px;">Select a metric</span>
<span class="t" id="t17" style="top:334.80px;font-size:15px;line-height:19px;color:#444;font-weight:700;letter-spacing:-0.457px;left:1645px;">Hourly</span>
<span class="t" id="t18" style="top:334.80px;font-size:15px;line-height:19px;color:#333;font-weight:700;letter-spacing:-0.613px;left:1711.5px;">Day</span>
<span class="t" id="t19" style="top:334.80px;font-size:15px;line-height:19px;color:#444;font-weight:700;letter-spacing:-0.263px;left:1759px;">Week</span>
<span class="t" id="t20" style="top:334.80px;font-size:15px;line-height:19px;color:#444;font-weight:700;letter-spacing:-0.219px;left:1819px;">Month</span>
<span class="t" id="t21" style="top:389.30px;font-size:17.7px;line-height:23px;color:#222;letter-spacing:0.066px;left:195px;">Users</span>
<span class="t" id="t22" style="top:708.20px;font-size:17.7px;line-height:23px;color:#333;letter-spacing:-0.223px;left:170px;">Users</span>
<span class="t" id="t23" style="top:732.50px;font-size:34px;line-height:43px;color:#222;letter-spacing:-0.574px;left:170px;">286</span>
<span class="t" id="t24" style="top:708.20px;font-size:17.7px;line-height:23px;color:#333;letter-spacing:0.000px;left:438px;">New Users</span>
<span class="t" id="t25" style="top:732.50px;font-size:34px;line-height:43px;color:#222;letter-spacing:-0.694px;left:438px;">280</span>
<span class="t" id="t26" style="top:708.20px;font-size:17.7px;line-height:23px;color:#333;letter-spacing:0.136px;left:706px;">Sessions</span>
<span class="t" id="t27" style="top:732.50px;font-size:34px;line-height:43px;color:#222;letter-spacing:-0.694px;left:706px;">327</span>
<span class="t" id="t28" style="top:708.20px;font-size:17.7px;line-height:23px;color:#333;letter-spacing:0.132px;left:974.4px;">Number of Sessions per User</span>
<span class="t" id="t29" style="top:732.50px;font-size:34px;line-height:43px;color:#222;letter-spacing:-0.625px;left:974.4px;">1.14</span>
<span class="t" id="t30" style="top:850.00px;font-size:17.7px;line-height:23px;color:#333;letter-spacing:0.112px;left:170px;">Pageviews</span>
<span class="t" id="t31" style="top:873.80px;font-size:34px;line-height:43px;color:#222;letter-spacing:-0.910px;left:170px;">1,375</span>
<span class="t" id="t32" style="top:850.00px;font-size:17.7px;line-height:23px;color:#333;letter-spacing:0.184px;left:438px;">Pages / Session</span>
<span class="t" id="t33" style="top:873.80px;font-size:34px;line-height:43px;color:#222;letter-spacing:-0.625px;left:438px;">4.20</span>
<span class="t" id="t34" style="top:850.00px;font-size:17.7px;line-height:23px;color:#333;letter-spacing:0.064px;left:706px;">Avg. Session Duration</span>
<span class="t" id="t35" style="top:873.80px;font-size:34px;line-height:43px;color:#222;letter-spacing:-0.510px;left:706px;">00:03:11</span>
<span class="t" id="t36" style="top:850.00px;font-size:17.7px;line-height:23px;color:#333;letter-spacing:-0.073px;left:974.4px;">Bounce Rate</span>
<span class="t" id="t37" style="top:873.80px;font-size:34px;line-height:43px;color:#222;letter-spacing:-1.646px;left:974.4px;">9.17%</span>
<span class="t" id="t38" style="top:680.10px;font-size:17.7px;line-height:23px;color:#222;letter-spacing:0.369px;left:1473.5px;">New Visitor</span>
<span class="t" id="t39" style="top:680.10px;font-size:17.7px;line-height:23px;color:#222;letter-spacing:0.277px;left:1609px;">Returning Visitor</span>
<span class="t" id="t40" style="top:1032.50px;font-size:17.7px;line-height:23px;color:#111;font-weight:700;letter-spacing:-0.554px;left:164px;">Demographics</span>
<span class="t" id="t41" style="top:1069.00px;font-size:17.7px;line-height:23px;color:#111;letter-spacing:-0.027px;left:164px;">Language</span>
<span class="t" id="t42" style="top:1109.50px;font-size:17.7px;line-height:23px;color:#4792cb;letter-spacing:0.010px;left:164px;">Country</span>
<span class="t" id="t43" style="top:1151.50px;font-size:17.7px;line-height:23px;color:#4792cb;letter-spacing:-0.134px;left:164px;">City</span>
<span class="t" id="t44" style="top:1198.50px;font-size:17.7px;line-height:23px;color:#111;font-weight:700;letter-spacing:-0.534px;left:164px;">System</span>
<span class="t" id="t45" style="top:1235.50px;font-size:17.7px;line-height:23px;color:#4792cb;letter-spacing:0.096px;left:164px;">Browser</span>
<span class="t" id="t46" style="top:1277.50px;font-size:17.7px;line-height:23px;color:#4792cb;letter-spacing:-0.004px;left:164px;">Operating System</span>
<span class="t" id="t47" style="top:1318.00px;font-size:17.7px;line-height:23px;color:#4792cb;letter-spacing:-0.049px;left:164px;">Service Provider</span>
<span class="t" id="t48" style="top:1365.00px;font-size:17.7px;line-height:23px;color:#111;font-weight:700;letter-spacing:-0.185px;left:164px;">Mobile</span>
<span class="t" id="t49" style="top:1402.00px;font-size:17.7px;line-height:23px;color:#4792cb;letter-spacing:-0.004px;left:164px;">Operating System</span>
<span class="t" id="t50" style="top:1444.00px;font-size:17.7px;line-height:23px;color:#4792cb;letter-spacing:-0.049px;left:164px;">Service Provider</span>
<span class="t" id="t51" style="top:1486.00px;font-size:17.7px;line-height:23px;color:#4792cb;letter-spacing:-0.033px;left:164px;">Screen Resolution</span>
<span class="t" id="t52" style="top:1032.50px;font-size:17.7px;line-height:23px;color:#111;font-weight:700;letter-spacing:-0.606px;left:744px;">Language</span>
<span class="t" id="t53" style="top:1032.50px;font-size:17.7px;line-height:23px;color:#111;font-weight:700;letter-spacing:-0.816px;right:276px;margin-right:0.816px;">Users</span>
<span class="t" id="t54" style="top:1032.50px;font-size:17.7px;line-height:23px;color:#111;font-weight:700;letter-spacing:-0.971px;left:1667.5px;">% Users</span>
<span class="t" id="t55" style="top:1069.00px;font-size:17.7px;line-height:23px;color:#222;letter-spacing:-0.510px;left:715px;">1.</span>
<span class="t" id="t56" style="top:1069.00px;font-size:17.7px;line-height:23px;color:#4792cb;letter-spacing:-0.167px;left:744px;">en-us</span>
<span class="t" id="t57" style="top:1069.00px;font-size:17.7px;line-height:23px;color:#222;letter-spacing:0.194px;right:276px;margin-right:-0.194px;">260</span>
<span class="t" id="t58" style="top:1069.00px;font-size:17.7px;line-height:23px;color:#222;letter-spacing:-0.455px;left:1805.5px;">90.91%</span>
<span class="t" id="t59" style="top:1113.00px;font-size:17.7px;line-height:23px;color:#222;letter-spacing:-0.510px;left:715px;">2.</span>
<span class="t" id="t60" style="top:1113.00px;font-size:17.7px;line-height:23px;color:#4792cb;letter-spacing:-0.059px;left:744px;">zh-cn</span>
<span class="t" id="t61" style="top:1113.00px;font-size:17.7px;line-height:23px;color:#222;letter-spacing:-0.125px;right:276px;margin-right:0.125px;">13</span>
<span class="t" id="t62" style="top:1113.00px;font-size:17.7px;line-height:23px;color:#222;letter-spacing:-0.590px;left:1687.5px;">4.55%</span>
<span class="t" id="t63" style="top:1156.50px;font-size:17.7px;line-height:23px;color:#222;letter-spacing:-0.510px;left:715px;">3.</span>
<span class="t" id="t64" style="top:1156.50px;font-size:17.7px;line-height:23px;color:#4792cb;letter-spacing:0.000px;left:744px;">c</span>
<span class="t" id="t65" style="top:1156.50px;font-size:17.7px;line-height:23px;color:#222;letter-spacing:0.000px;right:276px;">6</span>
<span class="t" id="t66" style="top:1156.50px;font-size:17.7px;line-height:23px;color:#222;letter-spacing:-0.479px;left:1684px;">2.10%</span>
<span class="t" id="t67" style="top:1200.50px;font-size:17.7px;line-height:23px;color:#222;letter-spacing:-0.510px;left:715px;">4.</span>
<span class="t" id="t68" style="top:1200.50px;font-size:17.7px;line-height:23px;color:#4792cb;letter-spacing:-0.125px;left:744px;">en</span>
<span class="t" id="t69" style="top:1200.50px;font-size:17.7px;line-height:23px;color:#222;letter-spacing:0.000px;right:276px;">3</span>
<span class="t" id="t70" style="top:1200.50px;font-size:17.7px;line-height:23px;color:#222;letter-spacing:-0.590px;left:1683px;">1.05%</span>
<span class="t" id="t71" style="top:1244.00px;font-size:17.7px;line-height:23px;color:#222;letter-spacing:-0.510px;left:715px;">5.</span>
<span class="t" id="t72" style="top:1244.00px;font-size:17.7px;line-height:23px;color:#4792cb;letter-spacing:-0.167px;left:744px;">en-gb</span>
<span class="t" id="t73" style="top:1244.00px;font-size:17.7px;line-height:23px;color:#222;letter-spacing:0.000px;right:276px;">3</span>
<span class="t" id="t74" style="top:1244.00px;font-size:17.7px;line-height:23px;color:#222;letter-spacing:-0.590px;left:1683px;">1.05%</span>
<span class="t" id="t75" style="top:1288.00px;font-size:17.7px;line-height:23px;color:#222;letter-spacing:-0.510px;left:715px;">6.</span>
<span class="t" id="t76" style="top:1288.00px;font-size:17.7px;line-height:23px;color:#4792cb;letter-spacing:-0.170px;left:744px;">es-es</span>
<span class="t" id="t77" style="top:1288.00px;font-size:17.7px;line-height:23px;color:#222;letter-spacing:0.000px;right:276px;">1</span>
<span class="t" id="t78" style="top:1288.00px;font-size:17.7px;line-height:23px;color:#222;letter-spacing:-0.590px;left:1683px;">0.35%</span>
<span class="t" id="t79" style="top:1330.00px;font-size:17.7px;line-height:23px;color:#2a6ebb;letter-spacing:0.353px;right:32px;margin-right:-0.353px;">view full report</span>
<span class="t" id="t80" style="top:1544.00px;font-size:15px;line-height:19px;color:#666;letter-spacing:0.164px;left:1416px;">This report was generated on 9/5/21 at 10:42:54 AM - <span style="color:#2a6ebb">Refresh Report</span></span>
<span class="t" id="t81" style="top:449.40px;font-size:13.4px;line-height:17px;color:#d9763b;font-weight:700;right:1893.6px;transform:scaleX(.92);transform-origin:100% 50%;">BETA</span>
<span class="t" id="t82" style="top:898.00px;font-size:13.4px;line-height:17px;color:#d9763b;font-weight:700;right:1889.6px;transform:scaleX(.92);transform-origin:100% 50%;">BETA</span>
<span class="t" id="t83" style="top:491.10px;font-size:19.5px;line-height:25px;color:#5f6368;left:-0.6px;">s</span>
<span class="t" id="t84" style="top:634.50px;font-size:19.5px;line-height:25px;color:#5f6368;left:-0.6px;">s</span>
<span class="t" id="t85" style="top:992.00px;font-size:19.5px;line-height:25px;color:#5f6368;left:-5.3px;">g</span>
<span class="t" id="t86" style="top:619.00px;font-size:15.3px;line-height:20px;color:#444;left:231.453px;width:120px;text-align:center;">Aug 3</span>
<span class="t" id="t87" style="top:619.00px;font-size:15.3px;line-height:20px;color:#444;left:342.507px;width:120px;text-align:center;">Aug 5</span>
<span class="t" id="t88" style="top:619.00px;font-size:15.3px;line-height:20px;color:#444;left:453.56px;width:120px;text-align:center;">Aug 7</span>
<span class="t" id="t89" style="top:619.00px;font-size:15.3px;line-height:20px;color:#444;left:564.613px;width:120px;text-align:center;">Aug 9</span>
<span class="t" id="t90" style="top:619.00px;font-size:15.3px;line-height:20px;color:#444;left:675.667px;width:120px;text-align:center;">Aug 11</span>
<span class="t" id="t91" style="top:619.00px;font-size:15.3px;line-height:20px;color:#444;left:786.72px;width:120px;text-align:center;">Aug 13</span>
<span class="t" id="t92" style="top:619.00px;font-size:15.3px;line-height:20px;color:#444;left:897.773px;width:120px;text-align:center;">Aug 15</span>
<span class="t" id="t93" style="top:619.00px;font-size:15.3px;line-height:20px;color:#444;left:1008.83px;width:120px;text-align:center;">Aug 17</span>
<span class="t" id="t94" style="top:619.00px;font-size:15.3px;line-height:20px;color:#444;left:1119.88px;width:120px;text-align:center;">Aug 19</span>
<span class="t" id="t95" style="top:619.00px;font-size:15.3px;line-height:20px;color:#444;left:1230.93px;width:120px;text-align:center;">Aug 21</span>
<span class="t" id="t96" style="top:619.00px;font-size:15.3px;line-height:20px;color:#444;left:1341.99px;width:120px;text-align:center;">Aug 23</span>
<span class="t" id="t97" style="top:619.00px;font-size:15.3px;line-height:20px;color:#444;left:1453.04px;width:120px;text-align:center;">Aug 25</span>
<span class="t" id="t98" style="top:619.00px;font-size:15.3px;line-height:20px;color:#444;left:1564.09px;width:120px;text-align:center;">Aug 27</span>
<span class="t" id="t99" style="top:619.00px;font-size:15.3px;line-height:20px;color:#444;left:1675.15px;width:120px;text-align:center;">Aug 29</span>
<span class="t" id="t100" style="top:619.00px;font-size:15.3px;line-height:20px;color:#444;left:1786.2px;width:120px;text-align:center;">Aug 31</span>
<span class="t" id="t101" style="top:619.00px;font-size:15.3px;line-height:20px;color:#444;left:173.5px;">…</span>
<span class="t" id="t102" style="top:427.00px;font-size:15.3px;line-height:20px;color:#444;left:184px;-webkit-text-stroke:3.5px #fff;paint-order:stroke fill;">20</span>
<span class="t" id="t103" style="top:521.50px;font-size:15.3px;line-height:20px;color:#444;left:184px;-webkit-text-stroke:3.5px #fff;paint-order:stroke fill;">10</span>
</div>
</body>
</html>
